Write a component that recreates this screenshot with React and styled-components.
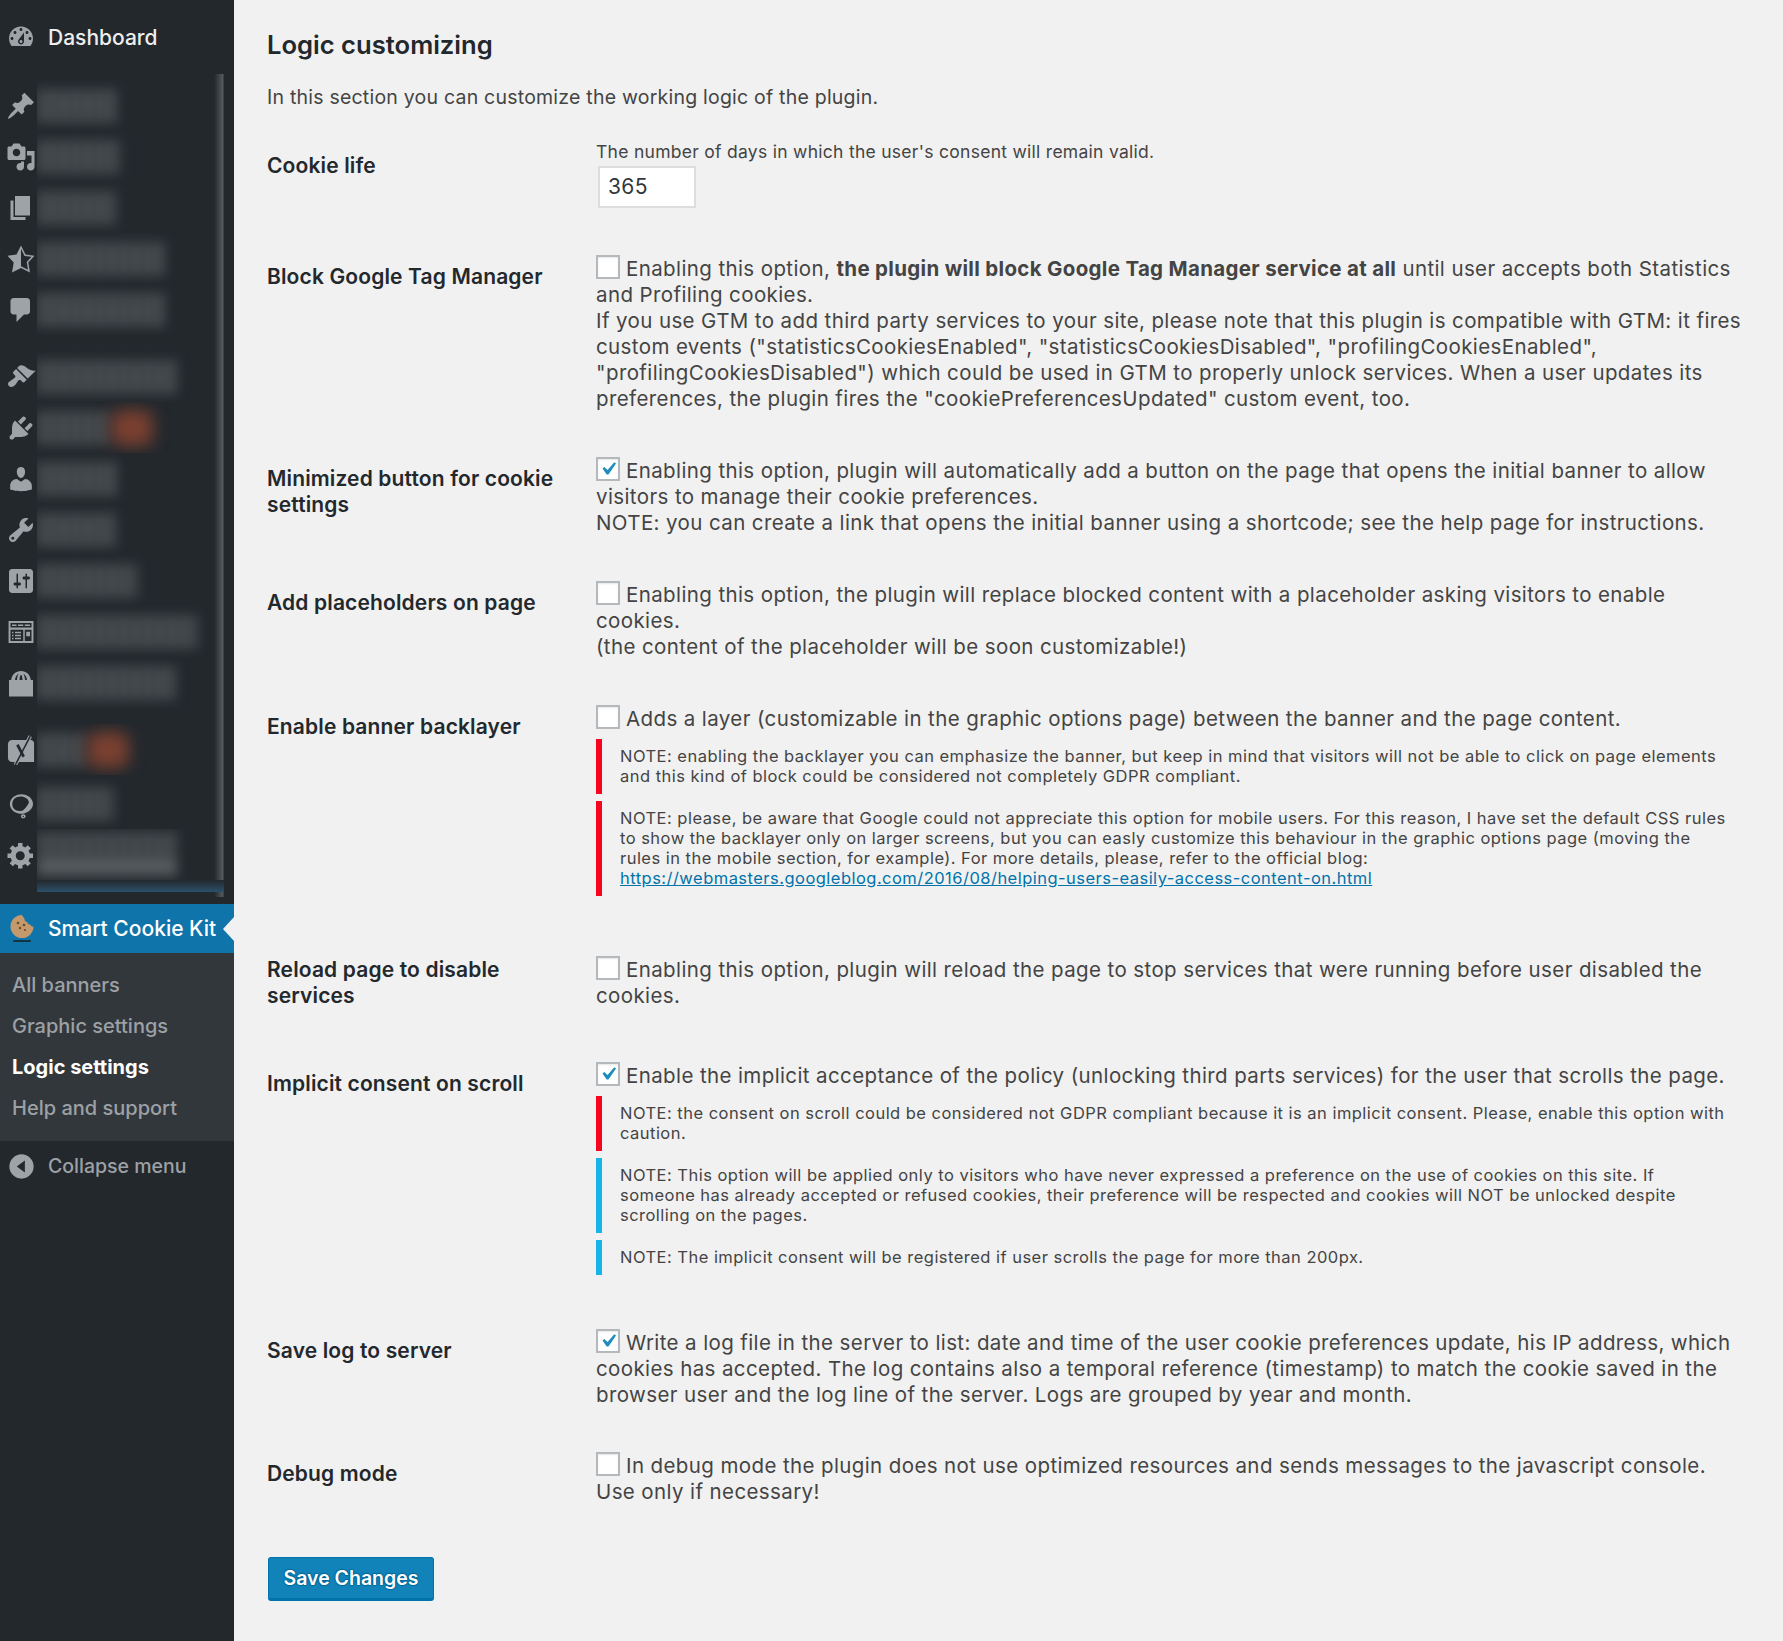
import React from "react";
import styled, { createGlobalStyle } from "styled-components";

const GlobalStyle = createGlobalStyle`
  html, body {
    margin: 0;
    padding: 0;
    background: #f1f1f1;
  }
  body {
    font-family: Inter, "Noto Sans", "Liberation Sans", sans-serif;
    color: #444;
    overflow: hidden;
  }
`;

const Page = styled.div`
  display: flex;
  align-items: stretch;
  height: 1641px;
  overflow: hidden;
`;

const Sidebar = styled.aside`
  width: 234px;
  flex: none;
  display: flex;
  flex-direction: column;
  background: #23282d;
`;

const DashboardRow = styled.div`
  display: flex;
  align-items: center;
  height: 74px;
  padding-left: 6px;
  gap: 12px;
  color: #eee;
  font-size: 21px;
  font-weight: 500;
`;

const MenuIcon = styled.svg`
  width: ${(p) => p.$size || 30}px;
  height: ${(p) => p.$size || 30}px;
  flex: none;
  fill: #9ea3a8;
`;

const BlurredNav = styled.nav`
  height: 823px;
  padding-top: 6px;
  box-sizing: border-box;
  background: linear-gradient(90deg, transparent 214px, #3d4347 219px, #565c60 223px, #23282d 224px);
`;

const NavRow = styled.div`
  display: flex;
  align-items: center;
  height: 51px;
  margin-top: ${(p) => p.$gap || 0}px;
`;

const IconSlot = styled.div`
  width: 37px;
  flex: none;
  display: flex;
  padding-left: 6px;
  box-sizing: border-box;
`;

const BlurCell = styled.div`
  width: 177px;
  height: 100%;
  overflow: hidden;
  display: flex;
  align-items: center;
`;

const BlurLabel = styled.div`
  height: ${(p) => (p.$tall ? 46 : 34)}px;
  flex: none;
  background: ${(p) =>
      p.$tall ? "linear-gradient(180deg, transparent 62%, #5c6165 62% 84%, transparent 84%)," : ""}
    repeating-linear-gradient(90deg, #4f5458 0 6px, #363b3f 6px 12px);
  filter: blur(6px);
`;

const BlurBadge = styled.div`
  width: 42px;
  height: 36px;
  flex: none;
  border-radius: 10px;
  background: #7a4030;
  filter: blur(8px);
`;

const BlurTint = styled.div`
  height: 12px;
  margin: 0 0 0 37px;
  width: 187px;
  background: linear-gradient(180deg, #23282d, #2c5069);
`;

const ActiveItem = styled.div`
  position: relative;
  display: flex;
  align-items: center;
  height: 49px;
  margin-top: 7px;
  padding-left: 9px;
  gap: 13px;
  background: #0e74aa;
  color: #fff;
  font-size: 21px;
  font-weight: 500;
  white-space: nowrap;
  &::after {
    content: "";
    position: absolute;
    right: 0;
    top: 13px;
    border: 12px solid transparent;
    border-left: 0;
    border-right: 11px solid #f1f1f1;
  }
`;

const Submenu = styled.ul`
  list-style: none;
  margin: 0;
  padding: 12px 0 12px 12px;
  background: #32373c;
`;

const SubmenuItem = styled.li`
  height: 41px;
  line-height: 41px;
  font-size: 20px;
  font-weight: ${(p) => (p.$active ? 700 : 500)};
  color: ${(p) => (p.$active ? "#fff" : "#9da1a6")};
`;

const CollapseRow = styled.div`
  display: flex;
  align-items: center;
  height: 50px;
  padding-left: 8px;
  gap: 13px;
  color: #9da1a6;
  font-size: 19.500px;
  font-weight: 500;
`;

const Content = styled.main`
  flex: 1;
  padding: 29px 36px 0 33px;
  min-width: 0;
`;

const Title = styled.h2`
  margin: 0;
  font-size: 25.600px;
  line-height: 32px;
  font-weight: 600;
  color: #23282d;
`;

const Intro = styled.p`
  margin: 23px 0 0;
  font-size: 19.500px;
  line-height: 26px;
  letter-spacing: 0.22px;
`;

const Row = styled.section`
  display: grid;
  grid-template-columns: 329px 1fr;
  margin-top: ${(p) => p.$top}px;
`;

const Label = styled.div`
  padding: ${(p) => p.$offset ?? 9}px 30px 0 0;
  font-size: 21px;
  line-height: 26px;
  font-weight: 600;
  letter-spacing: 0.14px;
  color: #23282d;
`;

const Body = styled.div`
  font-size: 20.500px;
  line-height: 26px;
  letter-spacing: 0.39px;
  color: #444;
  strong {
    letter-spacing: 0.32px;
  }
`;

const Hint = styled.div`
  font-size: 17.500px;
  line-height: 22px;
  letter-spacing: 0.28px;
`;

const NumberInput = styled.div`
  width: 98px;
  height: 42px;
  margin: 3px 0 0 2px;
  padding-left: 8px;
  box-sizing: border-box;
  border: 2px solid #ddd;
  background: #fff;
  color: #32373c;
  font-size: 21px;
  letter-spacing: 0.4px;
  line-height: 38px;
`;

const CheckBox = styled.span`
  display: inline-block;
  position: relative;
  width: 24px;
  height: 24px;
  margin-right: 6px;
  box-sizing: border-box;
  border: 2px solid #b4b9be;
  background: #fff;
  vertical-align: -3px;
  box-shadow: inset 0 1px 2px rgba(0, 0, 0, 0.1);
`;

const CheckMark = styled.svg`
  position: absolute;
  left: -3px;
  top: -3px;
  width: 26px;
  height: 26px;
  fill: #1e8cbe;
`;

const Note = styled.div`
  margin-top: 7px;
  padding: 7px 18px 8px 18px;
  border-left: 6px solid ${(p) => p.$color};
  font-size: 16.500px;
  line-height: 20px;
  letter-spacing: 0.47px;
  color: #444;
`;

const Notes = styled.div`
  margin-top: 4px;
`;

const NoteLink = styled.a`
  color: #0073aa;
  text-decoration: underline;
`;

const SaveButton = styled.button`
  display: block;
  width: 166px;
  height: 44px;
  margin: 52px 0 0 1px;
  padding: 0;
  border: 1px solid #0073aa;
  border-bottom-width: 3px;
  border-radius: 3px;
  background: #1283b8;
  color: #fff;
  font-family: inherit;
  font-size: 19.500px;
  font-weight: 600;
  text-shadow: 0 -1px 1px #006799, 1px 0 1px #006799, 0 1px 1px #006799, -1px 0 1px #006799;
`;

const Cookie = () => (
  <svg width="26" height="30" viewBox="0 0 26 30">
    <path d="M13 1a11.500 11.500 0 1 0 11.500 11.500c-1.500.3-2.800-.6-3-2-1.600.2-2.900-.8-3.100-2.300-1.800-.4-3.100-1.800-3-3.700C14.700 3.700 13.700 2.500 13 1z" fill="#c49a6c" />
    <circle cx="9" cy="9" r="1.300" fill="#6b4a2c" />
    <circle cx="15" cy="11" r="1.300" fill="#6b4a2c" />
    <circle cx="11" cy="14" r="1.200" fill="#6b4a2c" />
    <circle cx="16" cy="16" r="1.100" fill="#6b4a2c" />
    <rect x="4" y="26" width="18" height="2" rx="1" fill="#12333f" />
  </svg>
);

const YoastIcon = () => (
  <MenuIcon viewBox="0 0 20 20">
    <path d="M4 3.300h12.500c1.200 0 2.200 1 2.200 2.200V18H4c-1.500 0-2.700-1.200-2.700-2.700V6c0-1.500 1.200-2.700 2.700-2.700z" />
    <path d="M16.200.7L6.200 20" fill="none" stroke="#9ea3a8" strokeWidth="2.400" />
    <path d="M16.200.7L6.200 20" fill="none" stroke="#23282d" strokeWidth="1" />
    <path d="M7.600 6.500l4.200 8" fill="none" stroke="#23282d" strokeWidth="1.800" />
  </MenuIcon>
);

const iconPaths = {
  dashboard:
    "M3.760 16h12.480c1.100-1.370 1.760-3.110 1.760-5 0-4.420-3.580-8-8-8s-8 3.580-8 8c0 1.890.66 3.630 1.760 5zM10 4c.55 0 1 .45 1 1s-.45 1-1 1-1-.45-1-1 .45-1 1-1zM6 6c.55 0 1 .45 1 1s-.45 1-1 1-1-.45-1-1 .45-1 1-1zm8 0c.55 0 1 .45 1 1s-.45 1-1 1-1-.45-1-1 .45-1 1-1zm-5.370 5.550L12 7v6c0 1.100-.9 2-2 2s-2-.9-2-2c0-.57.24-1.080.63-1.450zM4 10c.55 0 1 .45 1 1s-.45 1-1 1-1-.45-1-1 .45-1 1-1zm12 0c.55 0 1 .45 1 1s-.45 1-1 1-1-.45-1-1 .45-1 1-1zm-5 3c0-.55-.45-1-1-1s-1 .45-1 1 .45 1 1 1 1-.45 1-1z",
  pin: "M10.440 3.020l1.820-1.820 6.360 6.350-1.830 1.820c-1.050-.68-2.480-.57-3.410.36l-.75.75c-.92.93-1.040 2.350-.35 3.410l-1.830 1.820-2.410-2.410-2.800 2.790c-.42.42-3.380 2.710-3.800 2.290s1.860-3.390 2.280-3.810l2.790-2.790L4.100 9.360l1.830-1.820c1.050.69 2.480.57 3.400-.36l.75-.75c.93-.92 1.050-2.350.36-3.410z",
  media:
    "M13 11V4c0-.55-.45-1-1-1h-1.670L9 1H5L3.670 3H2c-.55 0-1 .45-1 1v7c0 .55.45 1 1 1h10c.55 0 1-.45 1-1zM7 4.500c1.380 0 2.500 1.120 2.500 2.500S8.380 9.500 7 9.500 4.500 8.380 4.500 7 5.620 4.500 7 4.500zM14 6h5v10.500c0 1.380-1.120 2.500-2.500 2.500S14 17.880 14 16.500s1.120-2.500 2.500-2.500c.17 0 .34.02.5.05V9h-3V6zm-4 8.050V13h2v3.500c0 1.380-1.120 2.500-2.500 2.500S7 17.880 7 16.500 8.120 14 9.500 14c.17 0 .34.02.5.05z",
  pages: "M6 15V2h10v13H6zm-1 1h8v2H3V5h2v11z",
  star: "M10 1L7 7l-6 .75 4.130 4.620L4 19l6-3 6 3-1.120-6.630L19 7.750 13 7zm0 2.240l2.340 4.690 4.650.58-3.180 3.560.87 5.150L10 14.880V3.240z",
  comment:
    "M5 2h9c1.100 0 2 .9 2 2v7c0 1.100-.9 2-2 2h-2l-5 5v-5H5c-1.100 0-2-.9-2-2V4c0-1.100.9-2 2-2z",
  brush:
    "M14.480 11.060L7.410 3.990l1.500-1.500c.5-.56 2.300-.47 3.510.32 1.210.8 1.430 1.280 2.910 2.100 1.180.64 2.450 1.260 4.450.85zm-.71.71L6.700 4.700 4.930 6.470c-.39.39-.39 1.020 0 1.410l1.060 1.060c.39.39.39 1.030 0 1.420-.6.6-1.430 1.110-2.210 1.690-.35.26-.7.53-1.010.84C1.430 13.230.91 15 1.950 16.040c1.060 1.060 2.840.54 3.950-.57.32-.32.59-.67.85-1.030.57-.78 1.090-1.600 1.690-2.200.39-.39 1.030-.39 1.420 0l1.060 1.060c.39.39 1.020.39 1.410 0l1.770-1.770z",
  plugin:
    "M13.110 4.360L9.870 7.600 8 5.730l3.240-3.240c.35-.34 1.050-.2 1.560.32.52.51.66 1.210.31 1.550zm-8 1.770l.91-1.120 9.010 9.010-1.190.84c-.71.71-2.630 1.160-3.820 1.160H6.140L4.900 17.260c-.59.59-1.540.59-2.120 0-.59-.58-.59-1.530 0-2.120l1.240-1.240v-3.880c0-1.130.4-3.190 1.090-3.890zm7.260 3.970l3.240-3.240c.34-.35 1.040-.21 1.550.31.52.51.66 1.210.31 1.550l-3.240 3.250z",
  user: "M10 9.250c-2.270 0-2.730-3.440-2.730-3.440C7 4.020 7.820 2 9.970 2c2.160 0 2.980 2.020 2.710 3.810 0 0-.41 3.440-2.680 3.440zm0 2.570L12.720 10c2.390 0 4.520 2.330 4.520 4.530v2.490s-3.650 1.130-7.240 1.130c-3.650 0-7.240-1.130-7.240-1.130v-2.490c0-2.250 1.940-4.480 4.470-4.480z",
  wrench:
    "M16.680 9.770c-1.340 1.340-3.300 1.670-4.950.99l-5.410 6.520c-.99.99-2.590.99-3.580 0s-.99-2.590 0-3.570l6.520-5.420c-.68-1.650-.35-3.610.99-4.950 1.280-1.280 3.120-1.620 4.720-1.060l-2.890 2.890 2.820 2.820 2.860-2.870c.53 1.580.18 3.390-1.080 4.650zM3.810 16.210c.4.39 1.040.39 1.430 0 .4-.4.4-1.040 0-1.430-.39-.4-1.030-.4-1.430 0-.39.39-.39 1.030 0 1.430z",
  sliders:
    "M18 16V4c0-1.100-.9-2-2-2H4c-1.100 0-2 .9-2 2v12c0 1.100.9 2 2 2h12c1.100 0 2-.9 2-2zM8 11h1c.55 0 1 .45 1 1s-.45 1-1 1H8v1.500c0 .28-.22.5-.5.5s-.5-.22-.5-.5V13H6c-.55 0-1-.45-1-1s.45-1 1-1h1V5.500c0-.28.22-.5.5-.5s.5.22.5.5V11zm5-2h-1c-.55 0-1-.45-1-1s.45-1 1-1h1V5.500c0-.28.22-.5.5-.5s.5.22.5.5V7h1c.55 0 1 .45 1 1s-.45 1-1 1h-1v5.500c0 .28-.22.5-.5.5s-.5-.22-.5-.5V9z",
  table:
    "M1.700 2.700h16.600v14.600H1.700V2.700zm1.300 1.300v3h14V4H3zm0 4.500V16h8.500V8.500H3zm9.500 0V16H17V8.500h-4.500zM4 5h3v1H4V5zm4 0h3.500v1H8V5zm4.500 0H16v1h-3.500V5zM4 9.800h1v1H4v-1zm2 0h4v1H6v-1zm-2 2h1v1H4v-1zm2 0h4v1H6v-1zm-2 2h1v1H4v-1zm2 0h4v1H6v-1zm7.500-4h2.500v3h-2.500v-3z",
  bag: "M2 8h1.500C3.800 4.500 6.500 2 10 2s6.200 2.500 6.500 6H18v11H2V8zm4 0h1.300c.1-2 .6-3.600 1.400-4.400C7.200 4.200 6.200 5.800 6 8zm3 0h2c-.1-2-.5-3.500-1-3.500S9.100 6 9 8zm3.700 0H14c-.2-2.200-1.200-3.800-2.700-4.400.8.800 1.300 2.400 1.400 4.400z",
  quick:
    "M10.300 3.500c-4.200 0-7.700 2.900-7.700 6.500 0 3.300 2.800 6 6.500 6.500 1.200.1 2.100.1 3-.2 3.300-.9 5.900-3.500 5.900-6.300 0-3.600-3.500-6.500-7.700-6.500zM9.600 5c3.100 0 5.400 1.700 5.700 4-.7 1.600-1.700 3-3.300 4.700-.8.7-1.700 1-2.800 1-3.300-.2-5-2-5-4.700C4.200 7 6.500 5 9.600 5zM11.500 16.800c.9 0 1.600.6 1.600 1.300s-.7 1.400-1.600 1.400-1.600-.6-1.600-1.400.7-1.300 1.600-1.300zm0 1c-.4 0-.6.2-.6.4s.2.400.6.400.6-.2.6-.4-.2-.4-.6-.4z",
  gear: "M18 12h-2.180c-.17.7-.44 1.350-.81 1.930l1.540 1.540-2.100 2.100-1.540-1.540c-.58.36-1.230.63-1.910.79V19H8v-2.180c-.68-.16-1.330-.43-1.910-.79l-1.540 1.540-2.120-2.120 1.540-1.540c-.36-.58-.63-1.230-.79-1.910H1V9.030h2.170c.16-.7.44-1.350.8-1.940L2.430 5.550l2.100-2.100 1.540 1.540c.58-.37 1.240-.64 1.930-.81V2h3v2.180c.68.16 1.330.43 1.910.79l1.540-1.540 2.120 2.120-1.540 1.540c.36.59.64 1.240.8 1.940H18V12zm-8.500 1.500c1.660 0 3-1.340 3-3s-1.340-3-3-3-3 1.340-3 3 1.340 3 3 3z",
  collapse: "M10 1a9 9 0 1 1 0 18 9 9 0 0 1 0-18zm2.500 4.500L6.500 10l6 4.500v-9z",
};

const Icon = ({ name, size }) => (
  <MenuIcon viewBox="0 0 20 20" $size={size}>
    <path fillRule="evenodd" d={iconPaths[name]} />
  </MenuIcon>
);

const navItems = [
  { icon: "pin", width: 80 },
  { icon: "media", width: 84 },
  { icon: "pages", width: 78 },
  { icon: "star", width: 128 },
  { icon: "comment", width: 128 },
  { icon: "brush", width: 140, gap: 16 },
  { icon: "plugin", width: 74, badge: true },
  { icon: "user", width: 80 },
  { icon: "wrench", width: 78 },
  { icon: "sliders", width: 100 },
  { icon: "table", width: 160 },
  { icon: "bag", width: 138 },
  { icon: "yoast", width: 50, badge: true, gap: 16 },
  { icon: "quick", width: 76, gap: 3 },
  { icon: "gear", width: 140, tall: true },
];

const Check = ({ on }) => (
  <CheckBox>
    {on && (
      <CheckMark viewBox="0 0 20 20">
        <path d="M14.830 4.890l1.340.94-5.810 8.380H9.020L5.780 9.670l1.340-1.250 2.570 2.400z" />
      </CheckMark>
    )}
  </CheckBox>
);

const RED = "#f5051f";
const BLUE = "#16b4e8";

const App = () => {
  return (
    <>
      <GlobalStyle />
      <Page>
        <Sidebar>
          <DashboardRow>
            <Icon name="dashboard" />
            Dashboard
          </DashboardRow>
          <BlurredNav>
            {navItems.map((item) => (
              <NavRow key={item.icon} $gap={item.gap}>
                <IconSlot>{item.icon === "yoast" ? <YoastIcon /> : <Icon name={item.icon} />}</IconSlot>
                <BlurCell>
                  <BlurLabel $tall={item.tall} style={{ width: item.width }} />
                  {item.badge && <BlurBadge />}
                </BlurCell>
              </NavRow>
            ))}
            <BlurTint />
          </BlurredNav>
          <ActiveItem>
            <Cookie />
            Smart Cookie Kit
          </ActiveItem>
          <Submenu>
            <SubmenuItem>All banners</SubmenuItem>
            <SubmenuItem>Graphic settings</SubmenuItem>
            <SubmenuItem $active>Logic settings</SubmenuItem>
            <SubmenuItem>Help and support</SubmenuItem>
          </Submenu>
          <CollapseRow>
            <Icon name="collapse" size={27} />
            Collapse menu
          </CollapseRow>
        </Sidebar>
        <Content>
          <Title>Logic customizing</Title>
          <Intro>In this section you can customize the working logic of the plugin.</Intro>

          <Row $top={31}>
            <Label $offset={12}>Cookie life</Label>
            <div>
              <Hint>The number of days in which the user's consent will remain valid.</Hint>
              <NumberInput>365</NumberInput>
            </div>
          </Row>

          <Row $top={47}>
            <Label>Block Google Tag Manager</Label>
            <Body>
              <Check />
              Enabling this option, <strong>the plugin will block Google Tag Manager service at all</strong> until user
              accepts both Statistics and Profiling cookies.
              <br />
              If you use GTM to add third party services to your site, please note that this plugin is compatible with
              GTM: it fires custom events ("statisticsCookiesEnabled", "statisticsCookiesDisabled",
              "profilingCookiesEnabled", "profilingCookiesDisabled") which could be used in GTM to properly unlock
              services. When a user updates its preferences, the plugin fires the "cookiePreferencesUpdated" custom
              event, too.
            </Body>
          </Row>

          <Row $top={45}>
            <Label>Minimized button for cookie settings</Label>
            <Body>
              <Check on />
              Enabling this option, plugin will automatically add a button on the page that opens the initial banner to
              allow visitors to manage their cookie preferences.
              <br />
              NOTE: you can create a link that opens the initial banner using a shortcode; see the help page for
              instructions.
            </Body>
          </Row>

          <Row $top={45}>
            <Label>Add placeholders on page</Label>
            <Body>
              <Check />
              Enabling this option, the plugin will replace blocked content with a placeholder asking visitors to enable
              cookies.
              <br />
              (the content of the placeholder will be soon customizable!)
            </Body>
          </Row>

          <Row $top={45}>
            <Label>Enable banner backlayer</Label>
            <Body>
              <Check />
              Adds a layer (customizable in the graphic options page) between the banner and the page content.
              <Notes>
                <Note $color={RED}>
                  NOTE: enabling the backlayer you can emphasize the banner, but keep in mind that visitors will not be
                  able to click on page elements and this kind of block could be considered not completely GDPR
                  compliant.
                </Note>
                <Note $color={RED}>
                  NOTE: please, be aware that Google could not appreciate this option for mobile users. For this reason,
                  I have set the default CSS rules to show the backlayer only on larger screens, but you can easly
                  customize this behaviour in the graphic options page (moving the rules in the mobile section, for
                  example). For more details, please, refer to the official blog:{" "}
                  <NoteLink>https://webmasters.googleblog.com/2016/08/helping-users-easily-access-content-on.html</NoteLink>
                </Note>
              </Notes>
            </Body>
          </Row>

          <Row $top={60}>
            <Label $offset={1}>Reload page to disable services</Label>
            <Body>
              <Check />
              Enabling this option, plugin will reload the page to stop services that were running before user disabled
              the cookies.
            </Body>
          </Row>

          <Row $top={53}>
            <Label>Implicit consent on scroll</Label>
            <Body>
              <Check on />
              Enable the implicit acceptance of the policy (unlocking third parts services) for the user that scrolls
              the page.
              <Notes>
                <Note $color={RED}>
                  NOTE: the consent on scroll could be considered not GDPR compliant because it is an implicit consent.
                  Please, enable this option with caution.
                </Note>
                <Note $color={BLUE}>
                  NOTE: This option will be applied only to visitors who have never expressed a preference on the use of
                  cookies on this site. If someone has already accepted or refused cookies, their preference will be
                  respected and cookies will NOT be unlocked despite scrolling on the pages.
                </Note>
                <Note $color={BLUE}>
                  NOTE: The implicit consent will be registered if user scrolls the page for more than 200px.
                </Note>
              </Notes>
            </Body>
          </Row>

          <Row $top={54}>
            <Label>Save log to server</Label>
            <Body>
              <Check on />
              Write a log file in the server to list: date and time of the user cookie preferences update, his IP
              address, which cookies has accepted. The log contains also a temporal reference (timestamp) to match the
              cookie saved in the browser user and the log line of the server. Logs are grouped by year and month.
            </Body>
          </Row>

          <Row $top={44}>
            <Label>Debug mode</Label>
            <Body>
              <Check />
              In debug mode the plugin does not use optimized resources and sends messages to the javascript console.
              Use only if necessary!
            </Body>
          </Row>

          <SaveButton>Save Changes</SaveButton>
        </Content>
      </Page>
    </>
  );
};

export default App;
